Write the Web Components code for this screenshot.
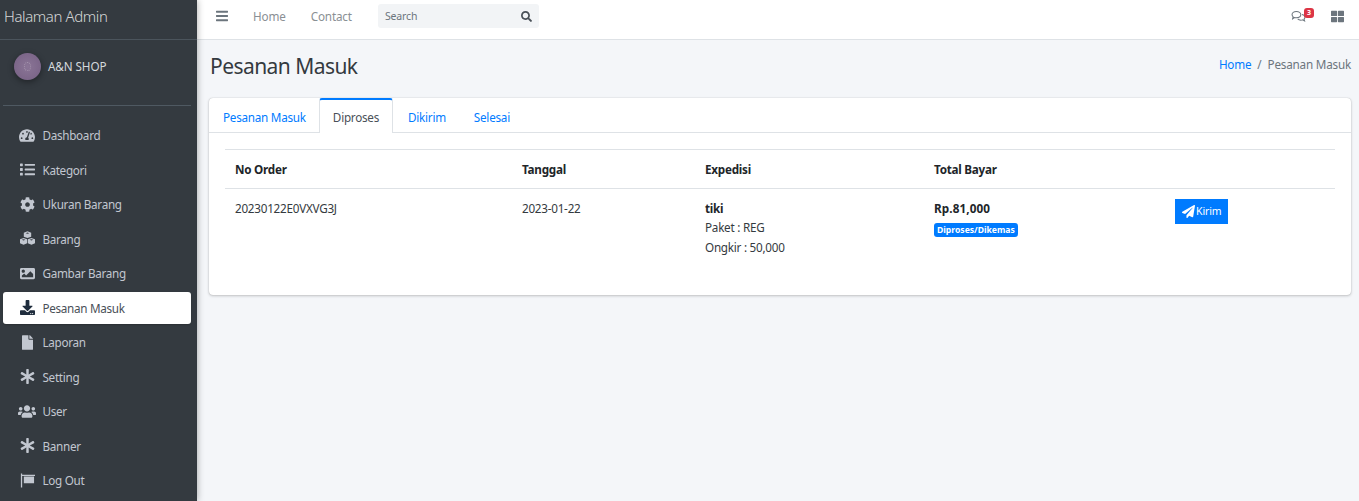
<!DOCTYPE html>
<html lang="id">
<head>
<meta charset="utf-8">
<title>Pesanan Masuk</title>
<style>
  html, body { margin: 0; height: 100%; overflow: hidden; }
  body { font-family: "Noto Sans", "Liberation Sans", sans-serif; }
  admin-app { height: 100vh; }
</style>
</head>
<body>
<admin-app>
  <admin-sidebar slot="sidebar" brand="Halaman Admin" shop="A&amp;N SHOP">
    <side-item icon="gauge">Dashboard</side-item>
    <side-item icon="list">Kategori</side-item>
    <side-item icon="cog">Ukuran Barang</side-item>
    <side-item icon="cubes">Barang</side-item>
    <side-item icon="image">Gambar Barang</side-item>
    <side-item icon="download" active>Pesanan Masuk</side-item>
    <side-item icon="file">Laporan</side-item>
    <side-item icon="asterisk">Setting</side-item>
    <side-item icon="users">User</side-item>
    <side-item icon="asterisk">Banner</side-item>
    <side-item icon="flag">Log Out</side-item>
  </admin-sidebar>
  <top-navbar slot="navbar"></top-navbar>
  <page-header slot="header" title="Pesanan Masuk" crumb="Pesanan Masuk"></page-header>
  <order-card slot="content"></order-card>
</admin-app>

<script>
const ICONS = {
  gauge: ['0 0 576 512', 'M288 32C128.94 32 0 160.94 0 320c0 52.8 14.25 102.26 39.06 144.8 5.61 9.62 16.3 15.2 27.44 15.2h443c11.14 0 21.83-5.58 27.44-15.2C561.75 422.26 576 372.8 576 320c0-159.06-128.94-288-288-288zm0 64c14.71 0 26.58 10.13 30.32 23.65-1.11 2.26-2.64 4.23-3.45 6.67l-9.22 27.67c-5.13 3.49-10.97 6.01-17.64 6.01-17.67 0-32-14.33-32-32S270.33 96 288 96zM96 384c-17.67 0-32-14.33-32-32s14.33-32 32-32 32 14.33 32 32-14.33 32-32 32zm48-160c-17.67 0-32-14.33-32-32s14.33-32 32-32 32 14.33 32 32-14.33 32-32 32zm246.77-72.41l-61.33 184C343.13 347.33 352 364.54 352 384c0 11.72-3.38 22.55-8.88 32H232.88c-5.5-9.45-8.88-20.28-8.88-32 0-33.94 26.5-61.43 59.9-63.59l61.34-184.01c4.17-12.56 17.73-19.45 30.36-15.17 12.57 4.19 19.35 17.79 15.17 30.36zm14.66 57.2l15.52-46.55c3.47-1.29 7.13-2.23 11.05-2.23 17.67 0 32 14.33 32 32s-14.33 32-32 32c-11.38-.01-20.89-6.28-26.57-15.22zM480 384c-17.67 0-32-14.33-32-32s14.33-32 32-32 32 14.33 32 32-14.33 32-32 32z'],
  list: ['0 0 512 512', 'M80 368H16a16 16 0 0 0-16 16v64a16 16 0 0 0 16 16h64a16 16 0 0 0 16-16v-64a16 16 0 0 0-16-16zm0-320H16A16 16 0 0 0 0 64v64a16 16 0 0 0 16 16h64a16 16 0 0 0 16-16V64a16 16 0 0 0-16-16zm0 160H16a16 16 0 0 0-16 16v64a16 16 0 0 0 16 16h64a16 16 0 0 0 16-16v-64a16 16 0 0 0-16-16zm416 176H176a16 16 0 0 0-16 16v32a16 16 0 0 0 16 16h320a16 16 0 0 0 16-16v-32a16 16 0 0 0-16-16zm0-320H176a16 16 0 0 0-16 16v32a16 16 0 0 0 16 16h320a16 16 0 0 0 16-16V80a16 16 0 0 0-16-16zm0 160H176a16 16 0 0 0-16 16v32a16 16 0 0 0 16 16h320a16 16 0 0 0 16-16v-32a16 16 0 0 0-16-16z'],
  cog: ['0 0 512 512', 'M487.4 315.7l-42.6-24.6c4.3-23.2 4.3-47 0-70.2l42.6-24.6c4.9-2.8 7.1-8.6 5.5-14-11.1-35.6-30-67.8-54.7-94.6-3.8-4.1-10-5.1-14.8-2.3L380.8 110c-17.9-15.4-38.5-27.3-60.8-35.1V25.8c0-5.6-3.9-10.5-9.4-11.7-36.7-8.2-74.3-7.8-109.2 0-5.5 1.2-9.4 6.1-9.4 11.7V75c-22.2 7.9-42.8 19.8-60.8 35.1L88.7 85.5c-4.9-2.8-11-1.9-14.8 2.3-24.7 26.7-43.6 58.9-54.7 94.6-1.7 5.4.6 11.2 5.5 14L67.3 221c-4.3 23.2-4.3 47 0 70.2l-42.6 24.6c-4.9 2.8-7.1 8.6-5.5 14 11.1 35.6 30 67.8 54.7 94.6 3.8 4.1 10 5.1 14.8 2.3l42.6-24.6c17.9 15.4 38.5 27.3 60.8 35.1v49.2c0 5.6 3.9 10.5 9.4 11.7 36.7 8.2 74.3 7.8 109.2 0 5.5-1.2 9.4-6.1 9.4-11.7v-49.2c22.2-7.9 42.8-19.8 60.8-35.1l42.6 24.6c4.9 2.8 11 1.9 14.8-2.3 24.7-26.7 43.6-58.9 54.7-94.6 1.5-5.5-.7-11.3-5.6-14.1zM256 336c-44.1 0-80-35.9-80-80s35.9-80 80-80 80 35.9 80 80-35.9 80-80 80z'],
  cubes: ['0 0 512 512', 'M256 10L130 56v138l126 46 126-46V56L256 10zm0 42l62 22-62 22-62-22 62-22zM122 236L0 282v136l122 50 122-50V282l-122-46zm0 42l62 22-62 22-62-22 62-22zM390 236l-122 46v136l122 50 122-50V282l-122-46zm0 42l62 22-62 22-62-22 62-22z'],
  image: ['0 0 512 512', 'M464 448H48c-26.51 0-48-21.49-48-48V112c0-26.51 21.49-48 48-48h416c26.51 0 48 21.49 48 48v288c0 26.51-21.49 48-48 48zM112 120c-30.928 0-56 25.072-56 56s25.072 56 56 56 56-25.072 56-56-25.072-56-56-56zM64 384h384V272l-87.515-87.515c-4.686-4.686-12.284-4.686-16.971 0L208 320l-55.515-55.515c-4.686-4.686-12.284-4.686-16.971 0L64 328v56z'],
  download: ['0 0 512 512', 'M216 0h80c13.3 0 24 10.7 24 24v168h87.7c17.8 0 26.7 21.5 14.1 34.1L269.7 378.3c-7.5 7.5-19.8 7.5-27.3 0L90.1 226.1c-12.6-12.6-3.7-34.1 14.1-34.1H192V24c0-13.3 10.7-24 24-24zm296 376v112c0 13.3-10.7 24-24 24H24c-13.3 0-24-10.7-24-24V376c0-13.3 10.7-24 24-24h146.7l49 49c20.1 20.1 52.5 20.1 72.6 0l49-49H488c13.3 0 24 10.7 24 24zm-124 88c0-11-9-20-20-20s-20 9-20 20 9 20 20 20 20-9 20-20zm64 0c0-11-9-20-20-20s-20 9-20 20 9 20 20 20 20-9 20-20z'],
  file: ['0 0 384 512', 'M224 136V0H24C10.7 0 0 10.7 0 24v464c0 13.3 10.7 24 24 24h336c13.3 0 24-10.7 24-24V160H248c-13.2 0-24-10.8-24-24zm160-14.1v6.1H256V0h6.1c6.4 0 12.5 2.5 17 7l97.9 98c4.5 4.5 7 10.6 7 16.9z'],
  asterisk: ['0 0 512 512', 'M478.21 334.093L336 256l142.21-78.093c11.795-6.477 15.961-21.384 9.232-33.037l-19.48-33.741c-6.728-11.653-21.72-15.499-33.227-8.523L296 186.718l3.475-162.204C299.763 11.061 288.937 0 275.48 0h-38.96c-13.456 0-24.283 11.061-23.994 24.514L216 186.718 77.265 102.607c-11.506-6.976-26.499-3.13-33.227 8.523l-19.48 33.741c-6.728 11.653-2.562 26.56 9.233 33.037L176 256 33.79 334.093c-11.795 6.477-15.961 21.384-9.232 33.037l19.48 33.741c6.728 11.653 21.721 15.499 33.227 8.523L216 325.282l-3.475 162.204C212.237 500.939 223.064 512 236.52 512h38.961c13.456 0 24.283-11.061 23.995-24.514L296 325.282l138.735 84.111c11.506 6.976 26.499 3.13 33.227-8.523l19.48-33.741c6.728-11.653 2.563-26.559-9.232-33.036z'],
  users: ['0 0 640 512', 'M96 224c35.3 0 64-28.7 64-64s-28.7-64-64-64-64 28.7-64 64 28.7 64 64 64zm448 0c35.3 0 64-28.7 64-64s-28.7-64-64-64-64 28.7-64 64 28.7 64 64 64zm32 32h-64c-17.6 0-33.5 7.1-45.1 18.6 40.3 22.1 68.9 62 75.1 109.4h66c17.7 0 32-14.3 32-32v-32c0-35.3-28.7-64-64-64zm-256 0c61.9 0 112-50.1 112-112S381.9 32 320 32 208 82.1 208 144s50.1 112 112 112zm76.8 32h-8.3c-20.8 10-43.9 16-68.5 16s-47.6-6-68.5-16h-8.3C179.6 288 128 339.6 128 403.2V432c0 26.5 21.5 48 48 48h288c26.5 0 48-21.5 48-48v-28.8c0-63.6-51.6-115.2-115.2-115.2zm-223.7-13.4C161.5 263.1 145.6 256 128 256H64c-35.3 0-64 28.7-64 64v32c0 17.7 14.3 32 32 32h65.9c6.3-47.4 34.9-87.3 75.2-109.4z'],
  flag: ['0 0 512 512', 'M30 20h44v472H30zM74 60h438v44H74zM130 120h350v230H130z'],
  bars: ['0 0 448 512', 'M16 132h416c8.837 0 16-7.163 16-16V76c0-8.837-7.163-16-16-16H16C7.163 60 0 67.163 0 76v40c0 8.837 7.163 16 16 16zm0 160h416c8.837 0 16-7.163 16-16v-40c0-8.837-7.163-16-16-16H16c-8.837 0-16 7.163-16 16v40c0 8.837 7.163 16 16 16zm0 160h416c8.837 0 16-7.163 16-16v-40c0-8.837-7.163-16-16-16H16c-8.837 0-16 7.163-16 16v40c0 8.837 7.163 16 16 16z'],
  search: ['0 0 512 512', 'M505 442.7L405.3 343c-4.5-4.5-10.6-7-17-7H372c27.6-35.3 44-79.7 44-128C416 93.1 322.9 0 208 0S0 93.1 0 208s93.1 208 208 208c48.3 0 92.7-16.4 128-44v16.3c0 6.4 2.5 12.5 7 17l99.7 99.7c9.4 9.4 24.6 9.4 33.9 0l28.3-28.3c9.4-9.4 9.4-24.6.1-34zM208 336c-70.7 0-128-57.2-128-128 0-70.7 57.2-128 128-128 70.7 0 128 57.2 128 128 0 70.7-57.2 128-128 128z'],
  grid: ['0 0 512 512', 'M296 32h192c13.255 0 24 10.745 24 24v160c0 13.255-10.745 24-24 24H296c-13.255 0-24-10.745-24-24V56c0-13.255 10.745-24 24-24zm-80 0H24C10.745 32 0 42.745 0 56v160c0 13.255 10.745 24 24 24h192c13.255 0 24-10.745 24-24V56c0-13.255-10.745-24-24-24zM0 296v160c0 13.255 10.745 24 24 24h192c13.255 0 24-10.745 24-24V296c0-13.255-10.745-24-24-24H24c-13.255 0-24 10.745-24 24zm296 184h192c13.255 0 24-10.745 24-24V296c0-13.255-10.745-24-24-24H296c-13.255 0-24 10.745-24 24v160c0 13.255 10.745 24 24 24z'],
  plane: ['0 0 512 512', 'M476 3.2L12.5 270.6c-18.1 10.4-15.8 35.6 2.2 43.2L121 358.4l287.3-253.2c5.5-4.9 13.3 2.6 8.6 8.3L176 407v80.5c0 23.6 28.5 32.9 42.5 15.8L282 426l124.6 52.2c14.2 6 30.4-2.9 33-18.2l72-432C515 7.8 493.3-6.8 476 3.2z']
};

function iconSvg(name, w, h) {
  const [box, d] = ICONS[name];
  return `<svg xmlns="http://www.w3.org/2000/svg" viewBox="${box}" width="${w}" height="${h}" fill="currentColor" aria-hidden="true"><path d="${d}"/></svg>`;
}

class AdminApp extends HTMLElement {
  constructor() {
    super();
    this.attachShadow({ mode: 'open' });
    this.shadowRoot.innerHTML = `
      <style>
        :host { display: flex; background: #f4f6f9; color: #212529; }
        .main { flex: 1; min-width: 0; display: flex; flex-direction: column; }
        .content { padding: 0 8px 0 12px; }
      </style>
      <slot name="sidebar"></slot>
      <div class="main">
        <slot name="navbar"></slot>
        <slot name="header"></slot>
        <div class="content"><slot name="content"></slot></div>
      </div>
    `;
  }
}

class AdminSidebar extends HTMLElement {
  constructor() {
    super();
    this.attachShadow({ mode: 'open' });
  }

  connectedCallback() {
    this.shadowRoot.innerHTML = `
      <style>
        :host { display: block; width: 197px; flex: none; background: #343a40; box-shadow: 0 0 7px rgba(0,0,0,.35); position: relative; z-index: 2; overflow: hidden; }
        .brand { height: 39px; line-height: 33px; padding-left: 4px; font-size: 15px; font-weight: 300; letter-spacing: -.4px; color: rgba(255,255,255,.8); border-bottom: 1px solid #4b545c; white-space: nowrap; }
        .user { display: flex; align-items: center; gap: 7px; height: 65px; padding: 0 0 13px 14px; box-sizing: border-box; }
        .avatar { width: 27px; height: 27px; border-radius: 50%; background: radial-gradient(circle, #8a7596 0, #7c6689 70%); box-shadow: 0 2px 6px rgba(0,0,0,.4); display: flex; align-items: center; justify-content: center; }
        .avatar i { width: 5px; height: 7px; border: 1px dotted #a594ad; border-radius: 50%; }
        .shop { font-size: 11.7px; letter-spacing: -.1px; color: #d5d9dd; }
        nav { margin: 0 6px 0 3px; border-top: 1px solid #4f5962; padding-top: 13px; display: flex; flex-direction: column; gap: 2.5px; }
      </style>
      <div class="brand">${this.getAttribute('brand')}</div>
      <div class="user"><span class="avatar"><i></i></span><span class="shop">A&amp;N SHOP</span></div>
      <nav><slot></slot></nav>
    `;
  }
}

class SideItem extends HTMLElement {
  constructor() {
    super();
    this.attachShadow({ mode: 'open' });
  }

  connectedCallback() {
    const name = this.getAttribute('icon');
    const w = { users: 18, gauge: 16, file: 11 }[name] || 15;
    this.shadowRoot.innerHTML = `
      <style>
        :host { display: flex; align-items: center; height: 32px; border-radius: 3px; color: #c2c7d0; font-size: 11.7px; letter-spacing: -.3px; white-space: nowrap; }
        :host([active]) { background: #fff; color: #495057; box-shadow: 0 1px 2px rgba(0,0,0,.2); }
        .ic { width: 39.5px; padding-left: 9px; box-sizing: border-box; flex: none; display: flex; justify-content: center; }
        svg { display: block; }
        :host([active]) svg { color: #1f2d3d; }
      </style>
      <span class="ic">${iconSvg(name, w, 15)}</span>
      <span><slot></slot></span>
    `;
  }
}

class TopNavbar extends HTMLElement {
  constructor() {
    super();
    this.attachShadow({ mode: 'open' });
    this.shadowRoot.innerHTML = `
      <style>
        :host { display: flex; align-items: center; height: 39px; padding: 0 15px 0 19px; background: #fff; border-bottom: 1px solid #dee2e6; color: #8a8f94; font-size: 11.7px; letter-spacing: -.15px; }
        .bars { color: #6c757d; display: flex; margin-right: 25px; margin-top: -7px; }
        .link { margin-top: -7px; }
        .link + .link { margin-left: 25px; }
        .search { margin-left: 26px; margin-top: -7px; width: 161px; height: 24px; box-sizing: border-box; padding: 0 7px; display: flex; align-items: center; justify-content: space-between; background: #f2f4f6; border-radius: 3px; font-size: 10.5px; color: #6c757d; }
        .search svg { color: #495057; }
        .right { margin-left: auto; display: flex; align-items: center; gap: 25px; margin-top: -7px; color: #6c757d; }
        .chat { position: relative; display: flex; }
        .badge { position: absolute; top: -2px; right: -8px; width: 10px; height: 10px; border-radius: 3px; background: #dc3545; color: #fff; font-size: 7px; font-weight: 700; line-height: 10px; text-align: center; letter-spacing: 0; }
      </style>
      ${iconSvg('bars', 12, 14).replace('<svg', '<svg class="bars"')}
      <span class="link">Home</span>
      <span class="link">Contact</span>
      <div class="search"><span>Search</span>${iconSvg('search', 11, 11)}</div>
      <div class="right">
        <span class="chat">
          <svg xmlns="http://www.w3.org/2000/svg" viewBox="0 0 16 13" width="15" height="12" fill="none" stroke="currentColor" stroke-width="1.1"><path d="M1 5c0-2 2-3.500 4.700-3.500s4.800 1.500 4.800 3.500-2.100 3.500-4.800 3.500c-.8 0-1.400-.1-2-.3L1.600 9.500l.6-2C1.400 6.800 1 6 1 5z"/><path d="M11.800 4.800c1.900.4 3.200 1.600 3.200 3 0 .8-.4 1.500-1 2.100l.6 2-2.200-1.200c-.6.2-1.200.3-1.900.3-1.400 0-2.600-.5-3.400-1.300"/></svg>
          <span class="badge">3</span>
        </span>
        ${iconSvg('grid', 13, 13)}
      </div>
    `;
  }
}

class PageHeader extends HTMLElement {
  constructor() {
    super();
    this.attachShadow({ mode: 'open' });
  }

  connectedCallback() {
    this.shadowRoot.innerHTML = `
      <style>
        :host { display: flex; justify-content: space-between; align-items: flex-start; height: 58px; padding: 12px 8px 0 13px; box-sizing: border-box; }
        h1 { margin: 0; font-size: 21px; font-weight: 400; line-height: 28px; letter-spacing: -.55px; color: #343a40; }
        .crumb { font-size: 11.7px; line-height: 22px; margin-top: 1px; letter-spacing: -.2px; color: #6c757d; }
        a { color: #007bff; }
        .sep { margin: 0 6px; }
      </style>
      <h1>${this.getAttribute('title')}</h1>
      <div class="crumb"><a>Home</a><span class="sep">/</span>${this.getAttribute('crumb')}</div>
    `;
  }
}

class OrderCard extends HTMLElement {
  constructor() {
    super();
    this.attachShadow({ mode: 'open' });
    this.shadowRoot.innerHTML = `
      <style>
        :host { display: block; height: 197px; box-sizing: border-box; background: #fff; border-radius: 4px; box-shadow: 0 0 1px rgba(0,0,0,.25), 0 1px 3px rgba(0,0,0,.2); font-size: 11.7px; letter-spacing: -.25px; }
        .tabs { display: flex; height: 35px; box-sizing: border-box; border-bottom: 1px solid #dee2e6; color: #007bff; }
        .tab { height: 35px; box-sizing: border-box; padding: 2px 12px 0 14px; display: flex; align-items: center; }
        .tab.on { color: #495057; border-top: 2px solid #007bff; border-left: 1px solid #dee2e6; border-right: 1px solid #dee2e6; background: #fff; border-radius: 3px 3px 0 0; padding: 0 13px; margin-left: 1px; }
        .tab.on + .tab { margin-left: 1px; }
        .tab.on ~ .tab { padding: 2px 14px 0; }
        .table { margin: 16px 16px 0; border-top: 1px solid #dee2e6; display: grid; grid-template-columns: 287px 183px 229px 241px 170px; color: #212529; }
        .th { height: 39px; box-sizing: border-box; padding-left: 10px; display: flex; align-items: center; font-weight: 700; border-bottom: 1px solid #dee2e6; }
        .td { padding: 10px 0 0 10px; line-height: 19.3px; color: #343a40; }
        b { color: #212529; display: block; }
        .money { letter-spacing: .1px; }
        .badge { display: inline-block; margin-top: 5px; padding: 0 3px; height: 14px; line-height: 14px; border-radius: 3px; background: #007bff; color: #fff; font-size: 8.6px; font-weight: 700; letter-spacing: 0; }
        .btn { display: inline-flex; align-items: center; gap: 1px; width: 53px; height: 25px; box-sizing: border-box; padding-left: 7px; background: #007bff; color: #fff; font-size: 10.5px; letter-spacing: -.1px; }
      </style>
      <div class="tabs">
        <span class="tab">Pesanan Masuk</span>
        <span class="tab on">Diproses</span>
        <span class="tab">Dikirim</span>
        <span class="tab">Selesai</span>
      </div>
      <div class="table">
        <div class="th">No Order</div>
        <div class="th">Tanggal</div>
        <div class="th">Expedisi</div>
        <div class="th">Total Bayar</div>
        <div class="th"></div>
        <div class="td">20230122E0VXVG3J</div>
        <div class="td">2023-01-22</div>
        <div class="td"><b>tiki</b>Paket : REG<br>Ongkir : 50,000</div>
        <div class="td"><b class="money">Rp.81,000</b><span class="badge">Diproses/Dikemas</span></div>
        <div class="td"><span class="btn">${iconSvg('plane', 13, 13)}Kirim</span></div>
      </div>
    `;
  }
}

customElements.define('admin-app', AdminApp);
customElements.define('admin-sidebar', AdminSidebar);
customElements.define('side-item', SideItem);
customElements.define('top-navbar', TopNavbar);
customElements.define('page-header', PageHeader);
customElements.define('order-card', OrderCard);
</script>
</body>
</html>
